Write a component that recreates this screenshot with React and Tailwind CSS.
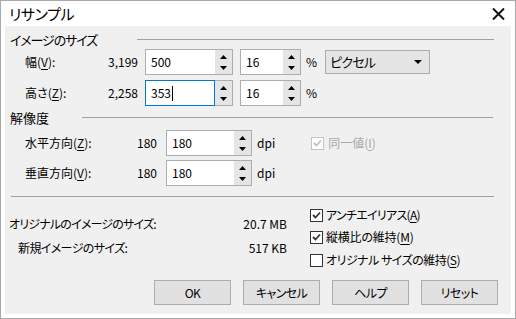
import React from "react";

const FONT = { fontFamily: '"Noto Sans CJK JP", sans-serif' };

function Arrows() {
  return (
    <div className="w-[18px] h-full border-y border-r border-[#adadad] bg-[#e5e5e5] flex flex-col items-center justify-between pt-[5px] pb-[4px]">
      <svg width="7" height="4" viewBox="0 0 7 4"><path d="M3.5 0 L7 4 L0 4 Z" fill="#000" /></svg>
      <svg width="7" height="4" viewBox="0 0 7 4"><path d="M0 0 L7 0 L3.5 4 Z" fill="#000" /></svg>
    </div>
  );
}

function Spin({ value, width, focused, caret }) {
  return (
    <div className="flex h-[26px]" style={{ width }}>
      <div className={`flex-1 h-full bg-white border flex items-center pl-[5px] ${focused ? "border-[#0078d7]" : "border-[#adadad] border-r-0"}`}>
        <span className="text-[12px] leading-none">{value}</span>
        {caret && <span className="w-px h-[15px] bg-black ml-[1px]" />}
      </div>
      <Arrows />
    </div>
  );
}

function Check({ checked, disabled }) {
  const c = disabled ? "#c0c0c0" : "#333333";
  return (
    <div className={`w-[13px] h-[13px] bg-white border flex items-center justify-center ${disabled ? "border-[#c4c4c4]" : "border-[#333333]"}`}>
      {checked && (
        <svg width="9" height="8" viewBox="0 0 9 8">
          <path d="M1 4 L3.5 6.5 L8 1.5" stroke={c} strokeWidth="1.8" fill="none" />
        </svg>
      )}
    </div>
  );
}

function Btn({ children }) {
  return (
    <div className="w-[77px] h-[25px] bg-[#e1e1e1] border border-[#adadad] flex items-center justify-center text-[12px] tracking-[-0.6px]">
      {children}
    </div>
  );
}

export default function App() {
  return (
    <div
      className="w-[516px] h-[319px] bg-white border border-[#a9a9a9] flex flex-col text-black [font-feature-settings:'palt']"
      style={FONT}
    >
      {/* title bar */}
      <div className="h-[25px] flex items-center justify-between pl-[8px] pr-[10px] shrink-0">
        <span className="text-[15px] leading-none tracking-[-0.4px]">リサンプル</span>
        <svg width="13" height="12" viewBox="0 0 13 12">
          <path d="M1 0.5 L12 11.5 M12 0.5 L1 11.5" stroke="#111" strokeWidth="2" />
        </svg>
      </div>

      {/* content */}
      <div className="mx-[4px] h-[288px] bg-[#f0f0f0] flex flex-col pt-[5px] text-[12px]">
        {/* header 1 */}
        <div className="h-[16px] flex items-center">
          <span className="w-[132px] pl-[5px] text-[13px] leading-none tracking-[-1.1px]">イメージのサイズ</span>
          <div className="w-[357px] h-px bg-[#a0a0a0]" />
        </div>

        {/* row 1 */}
        <div className="mt-[2px] h-[26px] flex items-center">
          <div className="w-[133px] pl-[20px] flex justify-between">
            <span>幅(<u className="underline-offset-2">V</u>):</span>
            <span>3,199</span>
          </div>
          <div className="ml-[7px]"><Spin value="500" width="88px" /></div>
          <div className="ml-[7px]"><Spin value="16" width="61px" /></div>
          <span className="ml-[5px]">%</span>
          <div className="ml-[8px] w-[105px] h-[24px] bg-[#e5e5e5] border border-[#adadad] flex items-center justify-between pl-[4px] pr-[7px]">
            <span className="text-[13px] tracking-[-0.8px]">ピクセル</span>
            <svg width="8" height="4" viewBox="0 0 8 4"><path d="M0 0 L8 0 L4 4 Z" fill="#000" /></svg>
          </div>
        </div>

        {/* row 2 */}
        <div className="mt-[5px] h-[26px] flex items-center">
          <div className="w-[133px] pl-[20px] flex justify-between">
            <span>高さ(<u className="underline-offset-2">Z</u>):</span>
            <span>2,258</span>
          </div>
          <div className="ml-[7px]"><Spin value="353" width="88px" focused caret /></div>
          <div className="ml-[7px]"><Spin value="16" width="61px" /></div>
          <span className="ml-[5px]">%</span>
        </div>

        {/* header 2 */}
        <div className="mt-[3px] h-[16px] flex items-center">
          <span className="w-[77px] pl-[5px] text-[13px] leading-none">解像度</span>
          <div className="w-[411px] h-px bg-[#a0a0a0]" />
        </div>

        {/* row 3 */}
        <div className="mt-[5px] h-[26px] flex items-center">
          <div className="w-[152px] pl-[20px] flex justify-between">
            <span>水平方向(<u className="underline-offset-2">Z</u>):</span>
            <span>180</span>
          </div>
          <div className="ml-[9px]"><Spin value="180" width="86px" /></div>
          <span className="ml-[5px]">dpi</span>
          <div className="ml-[36px] flex items-center gap-[4px] text-[#a8a8a8]">
            <Check checked disabled />
            <span>同一値(<u className="underline-offset-2">I</u>)</span>
          </div>
        </div>

        {/* row 4 */}
        <div className="mt-[4px] h-[26px] flex items-center">
          <div className="w-[152px] pl-[20px] flex justify-between">
            <span>垂直方向(<u className="underline-offset-2">V</u>):</span>
            <span>180</span>
          </div>
          <div className="ml-[9px]"><Spin value="180" width="86px" /></div>
          <span className="ml-[5px]">dpi</span>
        </div>

        {/* separator */}
        <div className="mt-[10px] ml-[6px] w-[483px] h-px bg-[#a0a0a0]" />

        {/* info + options */}
        <div className="flex mt-[10px]">
          <div className="w-[282px] flex flex-col pt-[9px] gap-[8px]">
            <div className="flex justify-between pl-[4px] h-[16px] items-center">
              <span className="tracking-[-0.8px]">オリジナルのイメージのサイズ:</span>
              <span>20.7 MB</span>
            </div>
            <div className="flex justify-between pl-[13px] h-[16px] items-center">
              <span className="tracking-[-0.6px]">新規イメージのサイズ:</span>
              <span>517 KB</span>
            </div>
          </div>
          <div className="ml-[23px] flex flex-col gap-[6px]">
            <div className="h-[16px] flex items-center gap-[3px]">
              <Check checked />
              <span className="tracking-[-0.7px]">アンチエイリアス(<u className="underline-offset-2">A</u>)</span>
            </div>
            <div className="h-[16px] flex items-center gap-[3px]">
              <Check checked />
              <span className="tracking-[-0.2px]">縦横比の維持(<u className="underline-offset-2">M</u>)</span>
            </div>
            <div className="h-[16px] flex items-center gap-[3px] mt-[1px]">
              <Check />
              <span className="tracking-[-0.5px]">オリジナル サイズの維持(<u className="underline-offset-2">S</u>)</span>
            </div>
          </div>
        </div>

        {/* buttons */}
        <div className="mt-[12px] ml-[149px] flex gap-[12px]">
          <Btn>OK</Btn>
          <Btn>キャンセル</Btn>
          <Btn>ヘルプ</Btn>
          <Btn>リセット</Btn>
        </div>
      </div>
    </div>
  );
}
